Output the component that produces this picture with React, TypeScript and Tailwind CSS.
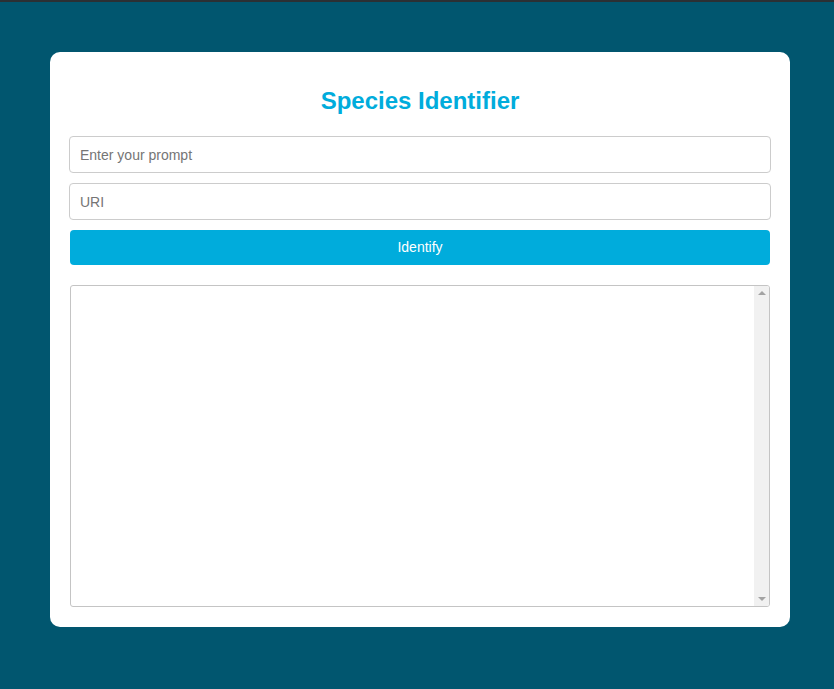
export default function App() {
	return (
		<div
			className="min-h-[689px] border-t-2 border-[#2b3034] bg-[#01566f] pt-[50px] pb-[60px]"
			style={{ fontFamily: '"Liberation Sans", Arial, sans-serif' }}
		>
			<div className="ml-[50px] flex w-[740px] flex-col rounded-[10px] bg-white px-5 pt-[33px] pb-5">
				<h1 className="text-center text-[24px] leading-[32px] font-bold text-[#00acdc]">
					Species Identifier
				</h1>

				<input
					type="text"
					placeholder="Enter your prompt"
					className="-mx-px mt-[19px] h-[37px] rounded border border-[#cccccc] px-[10px] text-[14px] text-[#333] outline-none placeholder:text-[#757575]"
				/>

				<input
					type="text"
					placeholder="URI"
					className="-mx-px mt-[10px] h-[37px] rounded border border-[#cccccc] px-[10px] text-[14px] text-[#333] outline-none placeholder:text-[#757575]"
				/>

				<button className="mt-[10px] h-[35px] rounded bg-[#00acdc] text-[14px] text-white">
					Identify
				</button>

				{/* output box with a classic scrollbar drawn beside it */}
				<div className="mt-5 flex h-[322px] overflow-hidden rounded-[3px] border border-[#c4c4c4]">
					<textarea
						readOnly
						className="flex-1 resize-none p-2 text-[14px] outline-none"
					/>
					<div className="flex w-[15px] flex-col items-center justify-between bg-[#f1f1f1] py-[5px]">
						<span className="h-0 w-0 border-x-[4px] border-b-[4px] border-x-transparent border-b-[#a3a3a3]" />
						<span className="h-0 w-0 border-x-[4px] border-t-[4px] border-x-transparent border-t-[#a3a3a3]" />
					</div>
				</div>
			</div>
		</div>
	);
}
